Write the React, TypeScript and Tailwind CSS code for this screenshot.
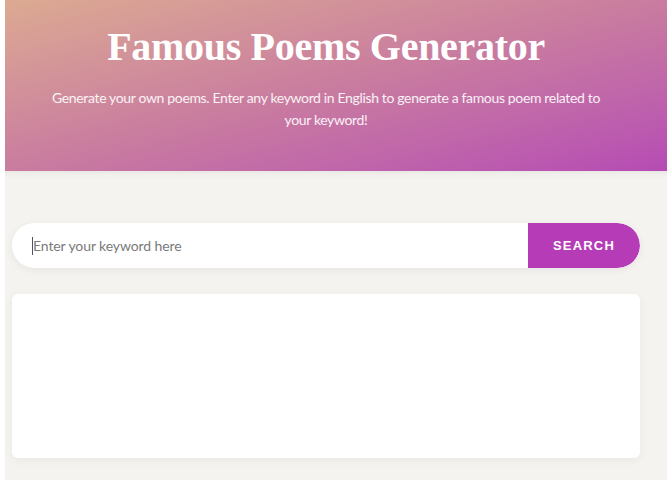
const App = () => {
  return (
    <div className="min-h-[480px] bg-white px-[5px]" style={{ fontFamily: "Lato, 'Open Sans', sans-serif" }}>
      <header className="h-[171px] bg-gradient-to-br from-[#dcaa91] via-[#c97c9f] to-[#b64bb4] flex flex-col items-center pt-[22px] pr-[20px] text-white">
        <h1 className="text-[40px] leading-[50px] font-bold font-['Liberation_Serif',serif] tracking-[-0.3px]">
          Famous Poems Generator
        </h1>
        <p className="mt-[15px] w-[560px] text-center text-[14px] leading-[22px] tracking-[-0.35px] text-white/90">
          Generate your own poems. Enter any keyword in English to generate a famous poem related to your keyword!
        </p>
      </header>
      <main className="bg-[#f4f3ef] min-h-[309px] shadow-[inset_0_6px_6px_-4px_rgba(0,0,0,0.06)] pl-[7px] pr-[27px] pt-[52px] pb-[22px]">
        <div className="flex h-[45px] rounded-full bg-white shadow-[0_2px_8px_rgba(0,0,0,0.06)] overflow-hidden">
          <div className="flex-1 flex items-center pl-[20px]">
            <span className="w-px h-[18px] bg-gray-600" />
            <span className="text-[14px] text-[#7a7a7a] tracking-[-0.1px]">Enter your keyword here</span>
          </div>
          <button className="w-[112px] bg-[#b63cb7] rounded-r-full text-white text-[13px] font-bold tracking-[1.2px] font-['Liberation_Sans',sans-serif]">
            SEARCH
          </button>
        </div>
        <div className="mt-[26px] h-[164px] rounded-[6px] bg-white shadow-[0_2px_10px_rgba(0,0,0,0.05)]" />
      </main>
    </div>
  );
};

export default App;
